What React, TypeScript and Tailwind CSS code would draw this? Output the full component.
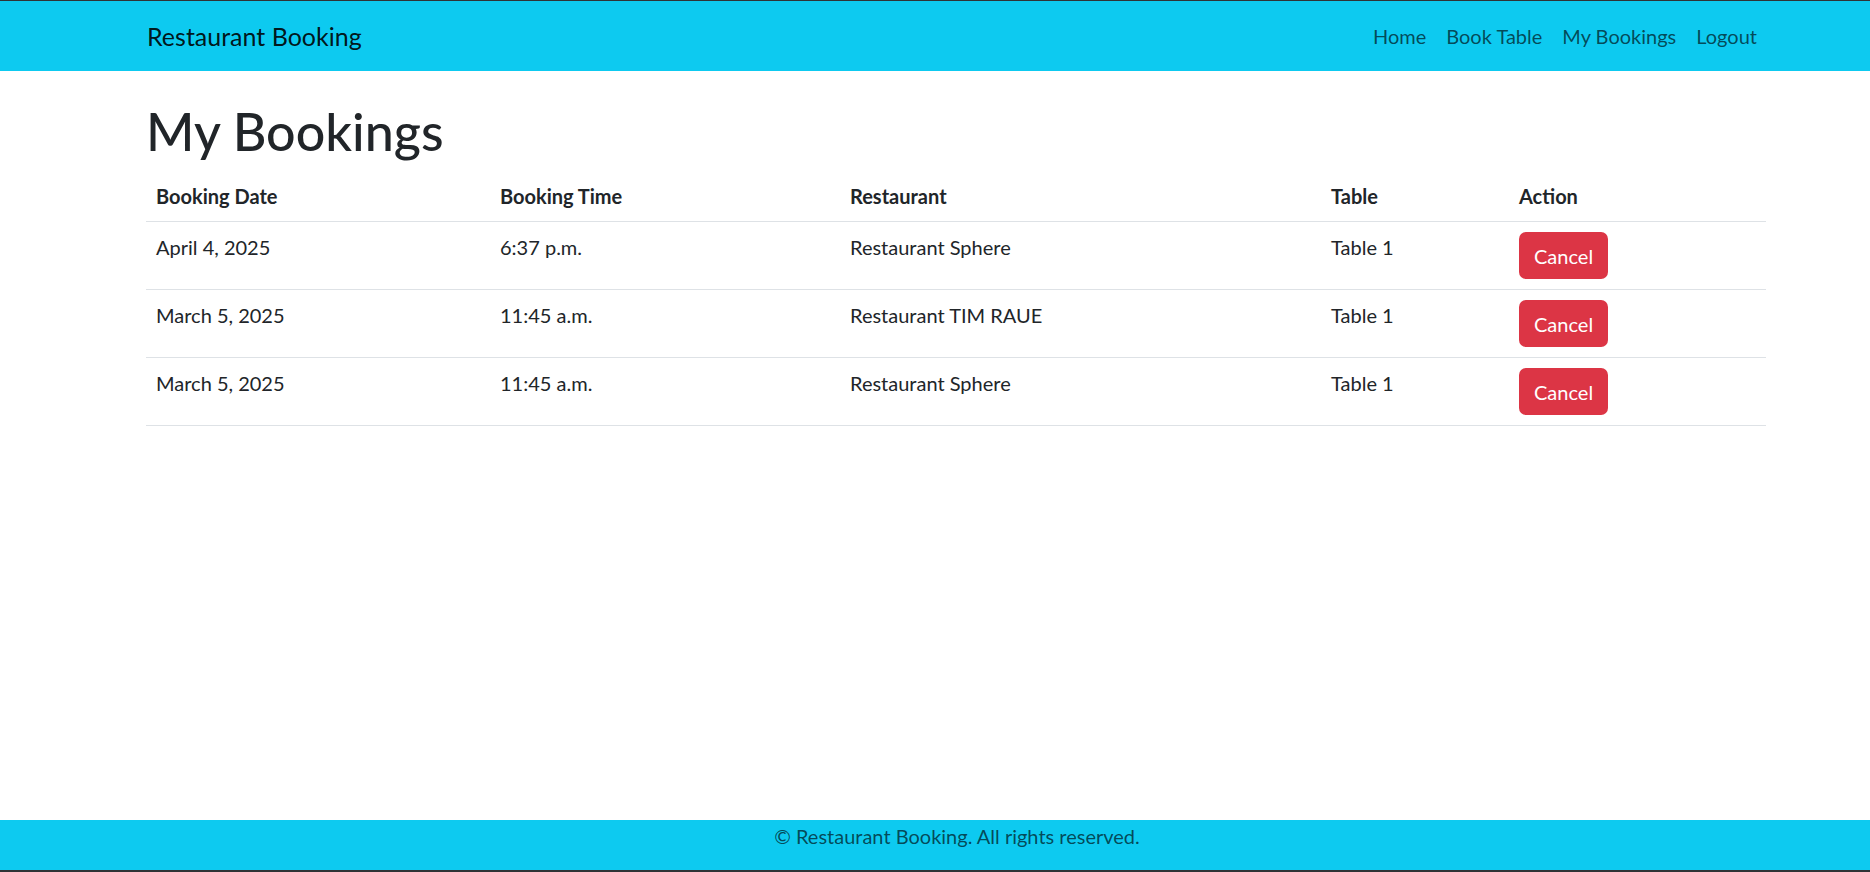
const bookings = [
  { date: "April 4, 2025", time: "6:37 p.m.", restaurant: "Restaurant Sphere", table: "Table 1" },
  { date: "March 5, 2025", time: "11:45 a.m.", restaurant: "Restaurant TIM RAUE", table: "Table 1" },
  { date: "March 5, 2025", time: "11:45 a.m.", restaurant: "Restaurant Sphere", table: "Table 1" },
];

const navLinks = ["Home", "Book Table", "My Bookings", "Logout"];

export default function App() {
  return (
    <div
      className="h-[872px] flex flex-col bg-white border-t border-b-2 border-[#2f3336] text-[#212529] overflow-hidden"
      style={{ fontFamily: "Lato, 'Noto Sans', sans-serif" }}
    >
      <nav className="h-[70px] shrink-0 bg-[#0dcaf0]">
        <div className="h-full pl-[147px] pr-[103px] flex items-center justify-between">
          <a className="text-[25px] leading-[36px] text-black/90">Restaurant Booking</a>
          <ul className="flex items-center">
            {navLinks.map((link) => (
              <li key={link}>
                <a className="block px-[10px] text-[20px] leading-[30px] text-black/65">{link}</a>
              </li>
            ))}
          </ul>
        </div>
      </nav>

      <main className="flex-1 pl-[146px] pr-[104px] pt-[30px]">
        <h1 className="text-[52px] leading-[60px] font-medium mb-[10px]">My Bookings</h1>
        <table className="w-full table-fixed border-collapse text-[20px] leading-[30px]">
          <thead>
            <tr className="border-b border-[#dee2e6] text-left">
              <th className="w-[344px] p-[10px] font-bold">Booking Date</th>
              <th className="w-[350px] p-[10px] font-bold">Booking Time</th>
              <th className="w-[481px] p-[10px] font-bold">Restaurant</th>
              <th className="w-[188px] p-[10px] font-bold">Table</th>
              <th className="p-[10px] font-bold">Action</th>
            </tr>
          </thead>
          <tbody>
            {bookings.map((b, i) => (
              <tr key={i} className="border-b border-[#dee2e6] align-top">
                <td className="p-[10px]">{b.date}</td>
                <td className="p-[10px]">{b.time}</td>
                <td className="p-[10px]">{b.restaurant}</td>
                <td className="p-[10px]">{b.table}</td>
                <td className="p-[10px]">
                  <button className="h-[47px] px-[15px] rounded-[7px] bg-[#dc3545] text-white text-[20px] leading-[30px]">
                    Cancel
                  </button>
                </td>
              </tr>
            ))}
          </tbody>
        </table>
      </main>

      <footer className="h-[50px] shrink-0 bg-[#0dcaf0] pl-[147px] pr-[103px] pt-[1px] text-center">
        <p className="text-[20px] leading-[30px] text-black/65">© Restaurant Booking. All rights reserved.</p>
      </footer>
    </div>
  );
}
